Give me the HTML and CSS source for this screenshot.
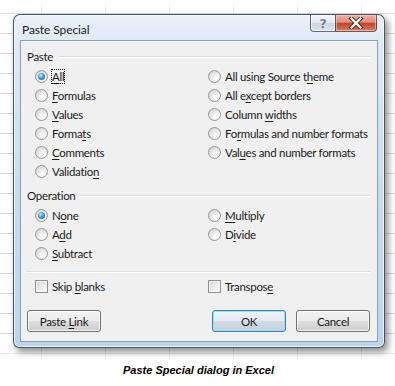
FILE: index.html
```html
<!DOCTYPE html>
<html>
<head>
<meta charset="utf-8">
<link rel="stylesheet" href="styles.css">
</head>
<body>
<div class="stage">
  <div class="dialog">
    <div class="titlebar">
      <span class="title">Paste Special</span>
      <div class="caps">
        <span class="cap help">?</span>
        <span class="cap close">
          <svg width="16" height="12" viewBox="0 0 16 12">
            <path d="M3.5 1.5 L12.5 10.5 M12.5 1.5 L3.5 10.5" stroke="#5a1a10" stroke-width="4.2" stroke-linecap="square" fill="none"/>
            <path d="M3.5 1.5 L12.5 10.5 M12.5 1.5 L3.5 10.5" stroke="#ffffff" stroke-width="2.4" stroke-linecap="square" fill="none"/>
          </svg>
        </span>
      </div>
    </div>
    <div class="client">
      <div class="ghead"><span>Paste</span><i class="line"></i></div>
      <div class="opts">
        <div class="col">
          <div class="row"><span class="radio on"></span><span class="lbl focus"><u>A</u>ll</span></div>
          <div class="row"><span class="radio"></span><span class="lbl"><u>F</u>ormulas</span></div>
          <div class="row"><span class="radio"></span><span class="lbl"><u>V</u>alues</span></div>
          <div class="row"><span class="radio"></span><span class="lbl">Forma<u>t</u>s</span></div>
          <div class="row"><span class="radio"></span><span class="lbl"><u>C</u>omments</span></div>
          <div class="row"><span class="radio"></span><span class="lbl">Validatio<u>n</u></span></div>
        </div>
        <div class="col">
          <div class="row"><span class="radio"></span><span class="lbl">All using Source t<u>h</u>eme</span></div>
          <div class="row"><span class="radio"></span><span class="lbl">All e<u>x</u>cept borders</span></div>
          <div class="row"><span class="radio"></span><span class="lbl">Column <u>w</u>idths</span></div>
          <div class="row"><span class="radio"></span><span class="lbl">Fo<u>r</u>mulas and number formats</span></div>
          <div class="row"><span class="radio"></span><span class="lbl">Val<u>u</u>es and number formats</span></div>
        </div>
      </div>
      <div class="ghead op"><span>Operation</span><i class="line"></i></div>
      <div class="opts">
        <div class="col">
          <div class="row"><span class="radio on"></span><span class="lbl">N<u>o</u>ne</span></div>
          <div class="row"><span class="radio"></span><span class="lbl">A<u>d</u>d</span></div>
          <div class="row"><span class="radio"></span><span class="lbl"><u>S</u>ubtract</span></div>
        </div>
        <div class="col">
          <div class="row"><span class="radio"></span><span class="lbl"><u>M</u>ultiply</span></div>
          <div class="row"><span class="radio"></span><span class="lbl">D<u>i</u>vide</span></div>
        </div>
      </div>
      <div class="sep"></div>
      <div class="opts checks">
        <div class="col">
          <div class="row"><span class="check"></span><span class="lbl">Skip <u>b</u>lanks</span></div>
        </div>
        <div class="col">
          <div class="row"><span class="check"></span><span class="lbl">Transpos<u>e</u></span></div>
        </div>
      </div>
      <div class="buttons">
        <span class="btn"><span>Paste <u>L</u>ink</span></span>
        <span class="btn default"><span>OK</span></span>
        <span class="btn"><span>Cancel</span></span>
      </div>
    </div>
  </div>
</div>
<p class="caption">Paste Special dialog in Excel</p>
</body>
</html>
```

FILE: styles.css
```css
html, body {
  margin: 0;
  padding: 0;
}
body {
  width: 395px;
  height: 386px;
  overflow: hidden;
  font-family: Lato, "Liberation Sans", sans-serif;
  font-size: 11.5px;
  letter-spacing: -0.3px;
  color: #1a1a1a;
  background:
    linear-gradient(to bottom, #fff 0, rgba(255,255,255,0) 18px, rgba(255,255,255,0) 348px, #fff 362px),
    linear-gradient(to right, #d9d9d9 1px, transparent 1px) 41px 0 / 64px 100%,
    linear-gradient(to bottom, #d9d9d9 1px, transparent 1px) 0 13px / 100% 20px,
    #fff;
}
.stage {
  padding: 14px 10px 0 13px;
}
.dialog {
  box-sizing: border-box;
  width: 372px;
  height: 334px;
  border: 1px solid rgba(38, 48, 60, 0.8);
  border-radius: 7px 7px 6px 6px;
  padding: 0 6px 5px 6px;
  background: linear-gradient(to bottom, #eaf1f9 0, #dce8f5 10%, #c8dbef 55%, #b9d6ef 100%);
  box-shadow: inset 0 0 0 1px rgba(255,255,255,0.75), 3px 4px 7px rgba(0,0,0,0.45);
}
.titlebar {
  height: 25px;
  display: flex;
  align-items: center;
  justify-content: space-between;
  padding-left: 2px;
}
.title {
  font-size: 12px;
  letter-spacing: -0.1px;
  margin-top: 4px;
}
.caps {
  display: flex;
  align-self: flex-start;
  margin-right: 1px;
}
.cap {
  box-sizing: border-box;
  height: 17px;
  display: flex;
  align-items: center;
  justify-content: center;
  border: 1px solid rgba(55, 65, 80, 0.75);
  border-top: none;
}
.help {
  width: 25px;
  border-right: none;
  border-radius: 0 0 0 4px;
  background: linear-gradient(to bottom, #f3f6fa 0, #e3e9f0 48%, #ccd6e2 52%, #dbe4ee 100%);
  box-shadow: inset 0 0 0 1px rgba(255,255,255,0.7);
  color: #6d7e92;
  font-family: "DejaVu Sans", sans-serif;
  font-weight: bold;
  font-size: 13px;
  line-height: 1;
  letter-spacing: 0;
  text-shadow: 0 0 1px #fff, 0 0 1px #fff;
}
.close {
  width: 42px;
  border-radius: 0 0 4px 0;
  background: linear-gradient(to bottom, #eab0a3 0, #dc8e7b 45%, #c4452e 52%, #d2694c 85%, #e08a6a 100%);
  box-shadow: inset 0 0 0 1px rgba(255,220,210,0.5);
}
.client {
  box-sizing: border-box;
  height: 302px;
  border: 1px solid #8e9fb3;
  background: #f0f0f0;
  padding: 6px 7px 0 6px;
}
.ghead {
  height: 19px;
  display: flex;
  align-items: center;
  gap: 5px;
}
.ghead.op {
  margin-top: 5px;
}
.line {
  flex: 1;
  height: 0;
  border-top: 1px solid #d5dfe5;
  border-bottom: 1px solid #fff;
}
.opts {
  display: grid;
  grid-template-columns: 173px 1fr;
  margin-top: 1px;
}
.col {
  padding-left: 8px;
}
.row {
  height: 19px;
  display: flex;
  align-items: center;
  gap: 4px;
  white-space: nowrap;
}
u {
  text-decoration: underline;
  text-underline-offset: 2px;
}
.focus {
  outline: 1px dotted #000;
  outline-offset: 0;
}
.radio {
  box-sizing: border-box;
  width: 13px;
  height: 13px;
  flex: none;
  border-radius: 50%;
  border: 1px solid #979797;
  background: radial-gradient(circle at 68% 72%, #ffffff 0, #f3f3f3 30%, #d4d4d4 85%);
  position: relative;
}
.radio.on::after {
  content: "";
  position: absolute;
  left: 2px;
  top: 2px;
  width: 7px;
  height: 7px;
  border-radius: 50%;
  background: radial-gradient(circle at 38% 35%, #c8eeff 0, #4aa0dd 40%, #1a5593 100%);
}
.sep {
  margin-top: 8px;
  height: 0;
  border-top: 1px solid #d5dfe5;
  border-bottom: 1px solid #fff;
}
.checks {
  margin-top: 4px;
}
.check {
  box-sizing: border-box;
  width: 13px;
  height: 13px;
  flex: none;
  border: 1px solid #8f8f8f;
  background: linear-gradient(135deg, #d6d6d6 0, #f2f2f2 70%, #fdfdfd 100%);
  box-shadow: inset 0 0 0 1px #f4f4f4;
}
.buttons {
  margin-top: 14px;
  display: flex;
  gap: 10px;
}
.btn {
  box-sizing: border-box;
  width: 74px;
  height: 22px;
  display: flex;
  align-items: center;
  justify-content: center;
  border: 1px solid #707070;
  border-radius: 3px;
  background: linear-gradient(to bottom, #f2f2f2 0, #ebebeb 48%, #dddddd 52%, #cfcfcf 100%);
  box-shadow: inset 0 0 0 1px rgba(255,255,255,0.75);
  white-space: pre;
}
.btn.default {
  margin-left: auto;
  border-color: #3c7fb1;
  background: linear-gradient(to bottom, #eef3f7 0, #e4ebf1 48%, #d2dce5 52%, #c5d1dc 100%);
  box-shadow: inset 0 0 0 1px #9ee0fa;
}
.caption {
  margin: 15px 0 0 0;
  text-align: center;
  font-family: "Liberation Sans", Arial, sans-serif;
  font-weight: bold;
  font-style: italic;
  font-size: 11px;
  letter-spacing: 0;
  line-height: 14px;
  padding-left: 2px;
  color: #000;
}
```
